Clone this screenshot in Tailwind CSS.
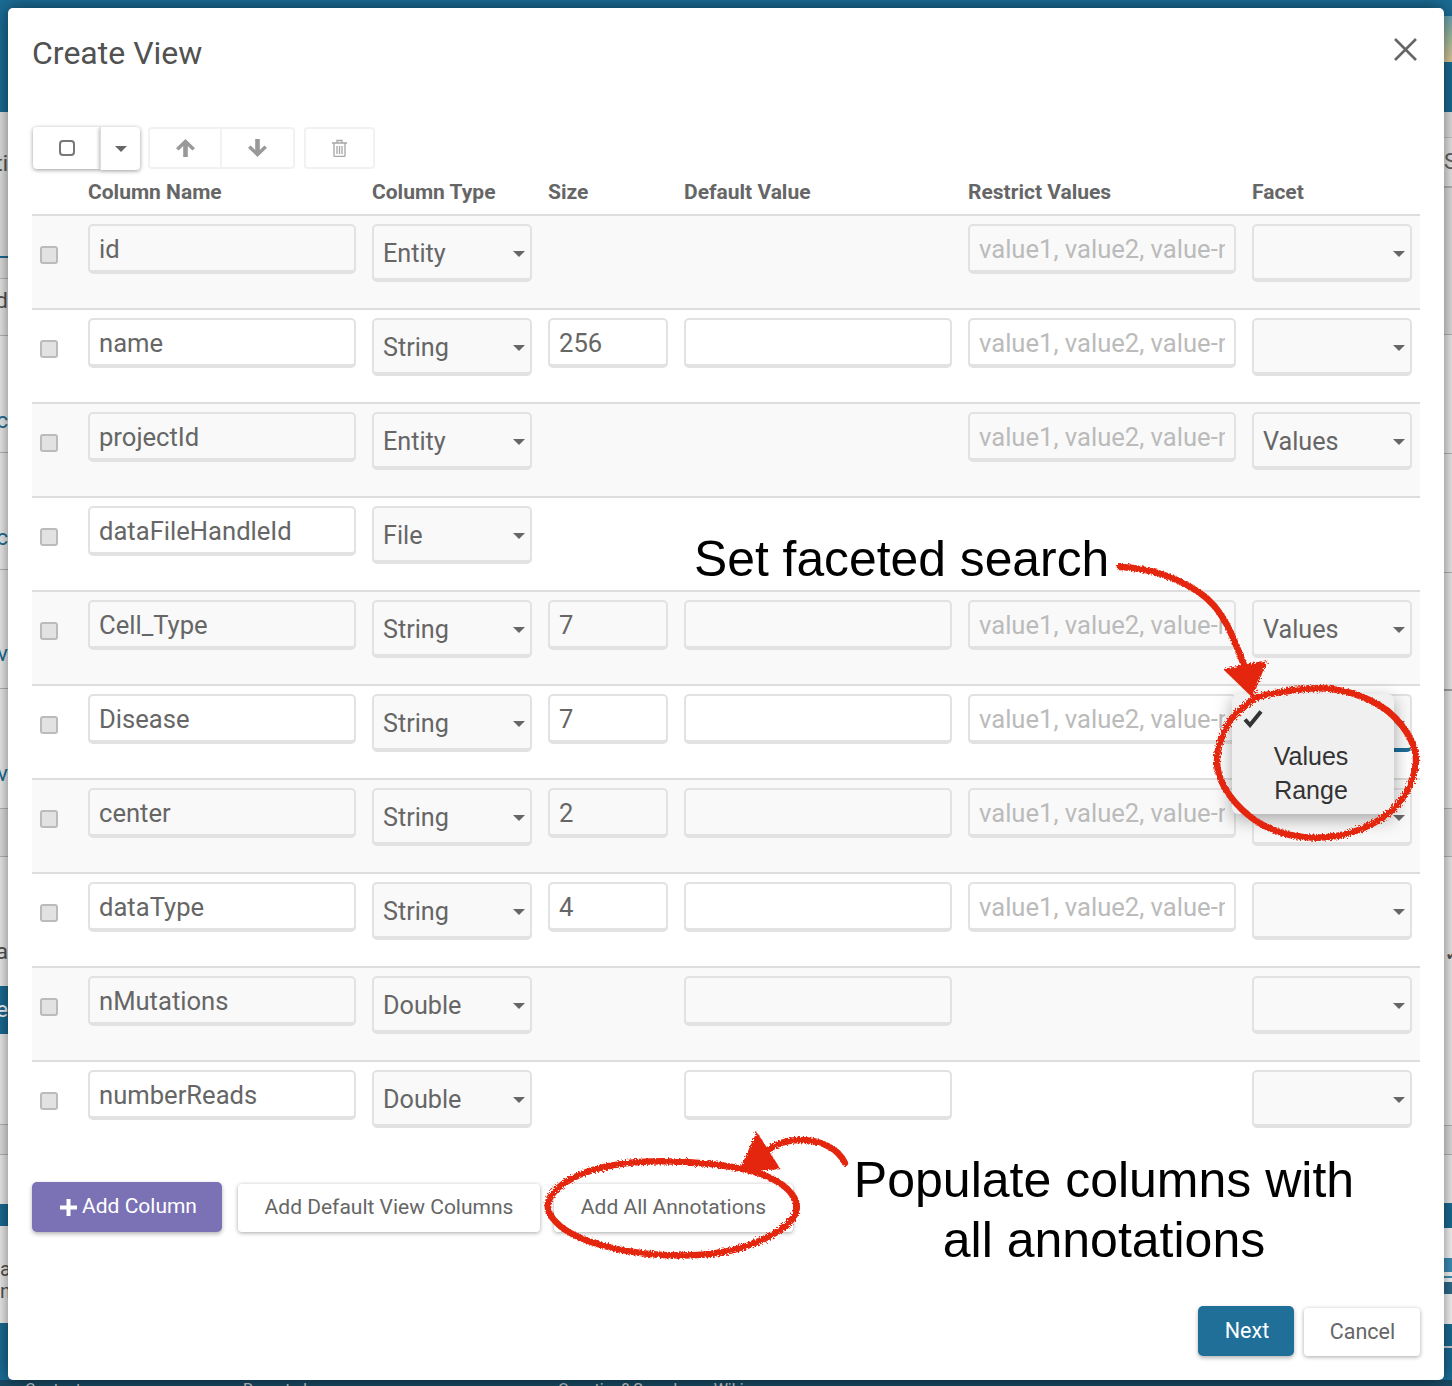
<!DOCTYPE html>
<html lang="en">
<head>
  <meta charset="UTF-8">
  <title>Create View</title>
  <script src="https://cdn.jsdelivr.net/npm/@tailwindcss/browser@4"></script>
</head>
<body class="bg-white">
<div class="relative flex h-[1386px] w-[1452px] flex-col overflow-hidden font-['Roboto',sans-serif]">
  <!-- page behind the dialog -->
  <div class="flex h-[1380px] justify-between bg-[#1b6d97]">
    <div class="w-2 overflow-hidden pt-[112px] text-right text-[22px] leading-none whitespace-nowrap">
      <div class="flex h-[144px] items-center justify-end bg-[#e6e6e6] pb-[40px] text-[#555]">ti</div>
      <div class="h-[2px] bg-[#1b6d97]"></div>
      <div class="h-[20px] bg-[#e6e6e6]"></div>
      <div class="flex h-[57px] items-center justify-end border-t border-[#bbb] bg-[#eee] pb-[12px] text-[#555]">d</div>
      <div class="flex h-[117px] items-center justify-end border-t border-[#bbb] bg-[#f2f2f2] pt-[54px] text-[#1b6d97]">c</div>
      <div class="flex h-[117px] items-center justify-end border-t border-[#bbb] bg-[#f2f2f2] pt-[54px] text-[#1b6d97]">c</div>
      <div class="flex h-[119px] items-center justify-end border-t border-[#bbb] bg-[#f2f2f2] pt-[50px] text-[#1b6d97]">v</div>
      <div class="flex h-[120px] items-center justify-end border-t border-[#bbb] bg-[#f2f2f2] pt-[50px] text-[#1b6d97]">v</div>
      <div class="h-[48px] border-t border-[#bbb] bg-[#e6e6e6]"></div>
      <div class="h-[35px] border-t border-[#bbb] bg-[#f2f2f2]"></div>
      <div class="flex h-[95px] items-start justify-end bg-[#f2f2f2] pt-[50px] text-[#555]">a</div>
      <div class="flex h-[48px] items-center justify-end bg-[#1b6d97] text-white">e</div>
      <div class="h-[90px] bg-[#f2f2f2]"></div>
      <div class="h-[30px] border-t border-[#bbb] bg-[#e6e6e6]"></div>
      <div class="h-[50px] border-t border-[#bbb] bg-[#f2f2f2]"></div>
      <div class="h-[22px] bg-[#1b6d97]"></div>
      <div class="h-[97px] bg-[#f2f2f2] pt-[32px] text-[20px] leading-[22px] text-[#555]"><div>a</div><div>n</div></div>
    </div>
    <div class="w-2 overflow-hidden pt-[16px] text-[22px] leading-none whitespace-nowrap">
      <div class="h-[46px] bg-gradient-to-b from-[#6aa7b5] via-[#a9c2a0] to-[#e5cf9f]"></div>
      <div class="h-[50px]"></div>
      <div class="h-[25px] bg-[#e6e6e6]"></div>
      <div class="flex h-[49px] items-center border-t border-[#ccc] bg-[#eee] text-[#666]">S</div>
      <div class="h-[148px] border-t-2 border-[#bbb] bg-[#e6e6e6]"></div>
      <div class="h-[119px] border-t border-[#bbb] bg-[#f2f2f2]"></div>
      <div class="h-[119px] border-t border-[#bbb] bg-[#f2f2f2]"></div>
      <div class="h-[117px] border-t border-[#bbb] bg-[#f2f2f2]"></div>
      <div class="h-[119px] border-t-2 border-[#aaa] bg-[#f2f2f2]"></div>
      <div class="h-[48px] border-t border-[#bbb] bg-[#e6e6e6]"></div>
      <div class="flex h-[269px] items-start border-t border-[#bbb] bg-[#f2f2f2] pt-[86px] text-[#555]">✓</div>
      <div class="h-[29px] border-t border-[#bbb] bg-[#e6e6e6]"></div>
      <div class="h-[49px] border-t border-[#bbb] bg-[#f2f2f2]"></div>
      <div class="h-[25px] bg-[#1b6d97]"></div>
      <div class="flex h-[96px] flex-col justify-center gap-1 bg-white">
        <div class="h-[14px] bg-[#3f93bd]"></div>
        <div class="h-[2px] bg-[#3f93bd]"></div>
        <div class="h-[12px] bg-[#2d6f92]"></div>
      </div>
      <div class="h-[22px] bg-[#1b6d97]"></div>
      <div class="h-[2px] bg-[#d8d8d8]"></div>
    </div>
  </div>
  <div class="relative h-[6px] overflow-hidden bg-[#174a64] text-[16px] leading-none whitespace-nowrap text-[#ccc]">
    <span class="absolute top-[2px] left-[25px]">Contact us</span>
    <span class="absolute top-[2px] left-[243px]">Report abuse</span>
    <span class="absolute top-[2px] left-[558px]">Question? Search our Wiki</span>
  </div>

  <!-- dialog -->
  <div class="absolute top-2 left-2 h-[1372px] w-[1436px] rounded-[5px] bg-white px-6 shadow-[0_0_18px_rgba(0,0,0,0.55)]">
    <div class="flex items-start justify-between pt-[24px]">
      <h1 class="text-[32px] leading-[42px] text-[#515151]">Create View</h1>
      <svg class="mt-[6px] mr-[3px]" width="23" height="23" viewBox="0 0 23 23" fill="none" stroke="#666" stroke-width="2.6"><path d="M1 1 22 22M22 1 1 22"/></svg>
    </div>

    <!-- toolbar -->
    <div class="mt-[53px] ml-[1px] flex h-[43px] items-start">
      <div class="flex h-[42px] w-[67px] items-center justify-center rounded-l-[4px] bg-white shadow-[0_1px_4px_rgba(0,0,0,0.4)]">
        <div class="h-4 w-4 rounded-[4px] border-2 border-[#777]"></div>
      </div>
      <div class="flex h-[43px] w-[40px] items-center justify-center rounded-r-[4px] border-l border-[#ddd] bg-white shadow-[0_1px_4px_rgba(0,0,0,0.4)]">
        <div class="border-x-[6px] border-t-[6px] border-x-transparent border-t-[#666]"></div>
      </div>
      <div class="ml-2 flex h-[42px] w-[147px] rounded-[4px] border-2 border-[#f2f2f2]">
        <div class="flex w-[72px] items-center justify-center border-r-2 border-[#f2f2f2]">
          <svg width="19" height="18" viewBox="0 0 19 18" fill="#999"><path d="M9.5 0 19 9.2l-2.6 2.4-4.6-4.5V18H7.2V7.100L2.600 11.600 0 9.200z"/></svg>
        </div>
        <div class="flex flex-1 items-center justify-center">
          <svg width="19" height="18" viewBox="0 0 19 18" fill="#999"><path d="M9.500 18 19 8.800l-2.600-2.400-4.600 4.500V0H7.200v10.900L2.600 6.400 0 8.800z"/></svg>
        </div>
      </div>
      <div class="ml-[9px] flex h-[42px] w-[71px] items-center justify-center rounded-[4px] border-2 border-[#f2f2f2]">
        <svg width="17" height="18" viewBox="0 0 17 18" fill="none" stroke="#a6a6a6" stroke-width="1.300"><path d="M1 4h15M3 4v12.500a1 1 0 0 0 1 1h9a1 1 0 0 0 1-1V4M6 4V1.500h5V4M6 7v8M8.500 7v8M11 7v8"/></svg>
      </div>
    </div>

    <!-- table header -->
    <div class="grid h-[44px] grid-cols-[40px_268px_160px_120px_268px_268px_160px] items-center gap-x-4 pt-[1px] text-[21px] font-bold text-[#666]">
      <div></div><div>Column Name</div><div>Column Type</div><div>Size</div><div>Default Value</div><div>Restrict Values</div><div>Facet</div>
    </div>

    <!-- rows -->
    <div class="w-[1388px]">
      <div class="grid h-[94px] grid-cols-[40px_268px_160px_120px_268px_268px_160px] items-start gap-x-4 border-t-2 border-[#ddd] bg-[#f9f9f9] pt-2">
        <input type="checkbox" class="mt-[22px] ml-2 h-[18px] w-[18px] appearance-none rounded-[3px] border-2 border-[#bbb] bg-[#e2e2e2]">
        <input value="id" class="h-[50px] w-full rounded-[5px] border-2 border-b-4 border-[#e2e2e2] bg-transparent px-[9px] pt-[2px] text-[25.6px] text-[#666] outline-none">
        <div class="flex h-[58px] items-center justify-between rounded-[5px] border-2 border-b-4 border-[#e2e2e2] pt-[4px] pr-[5px] pl-[9px] text-[25.2px] text-[#666]">Entity<i class="border-x-[6px] border-t-[6px] border-x-transparent border-t-[#666]"></i></div>
        <div></div><div></div>
        <input placeholder="value1, value2, value-n" class="h-[50px] w-full rounded-[5px] border-2 border-b-4 border-[#e2e2e2] bg-transparent px-[9px] pt-[2px] text-[25.6px] outline-none placeholder:text-[#bbb]">
        <div class="flex h-[58px] items-center justify-between rounded-[5px] border-2 border-b-4 border-[#e2e2e2] pt-[4px] pr-[5px] pl-[9px] text-[25.2px] text-[#666]"><span></span><i class="border-x-[6px] border-t-[6px] border-x-transparent border-t-[#666]"></i></div>
      </div>
      <div class="grid h-[94px] grid-cols-[40px_268px_160px_120px_268px_268px_160px] items-start gap-x-4 border-t-2 border-[#ddd] pt-2">
        <input type="checkbox" class="mt-[22px] ml-2 h-[18px] w-[18px] appearance-none rounded-[3px] border-2 border-[#bbb] bg-[#e2e2e2]">
        <input value="name" class="h-[50px] w-full rounded-[5px] border-2 border-b-4 border-[#e2e2e2] bg-transparent px-[9px] pt-[2px] text-[25.6px] text-[#666] outline-none">
        <div class="flex h-[58px] items-center justify-between rounded-[5px] border-2 border-b-4 border-[#e2e2e2] bg-[#f9f9f9] pt-[4px] pr-[5px] pl-[9px] text-[25.2px] text-[#666]">String<i class="border-x-[6px] border-t-[6px] border-x-transparent border-t-[#666]"></i></div>
        <input value="256" class="h-[50px] w-full rounded-[5px] border-2 border-b-4 border-[#e2e2e2] bg-transparent px-[9px] pt-[2px] text-[25.6px] text-[#666] outline-none">
        <input class="h-[50px] w-full rounded-[5px] border-2 border-b-4 border-[#e2e2e2] bg-transparent px-[9px] pt-[2px] text-[25.6px] outline-none">
        <input placeholder="value1, value2, value-n" class="h-[50px] w-full rounded-[5px] border-2 border-b-4 border-[#e2e2e2] bg-transparent px-[9px] pt-[2px] text-[25.6px] outline-none placeholder:text-[#bbb]">
        <div class="flex h-[58px] items-center justify-between rounded-[5px] border-2 border-b-4 border-[#e2e2e2] bg-[#f9f9f9] pt-[4px] pr-[5px] pl-[9px] text-[25.2px] text-[#666]"><span></span><i class="border-x-[6px] border-t-[6px] border-x-transparent border-t-[#666]"></i></div>
      </div>
      <div class="grid h-[94px] grid-cols-[40px_268px_160px_120px_268px_268px_160px] items-start gap-x-4 border-t-2 border-[#ddd] bg-[#f9f9f9] pt-2">
        <input type="checkbox" class="mt-[22px] ml-2 h-[18px] w-[18px] appearance-none rounded-[3px] border-2 border-[#bbb] bg-[#e2e2e2]">
        <input value="projectId" class="h-[50px] w-full rounded-[5px] border-2 border-b-4 border-[#e2e2e2] bg-transparent px-[9px] pt-[2px] text-[25.6px] text-[#666] outline-none">
        <div class="flex h-[58px] items-center justify-between rounded-[5px] border-2 border-b-4 border-[#e2e2e2] pt-[4px] pr-[5px] pl-[9px] text-[25.2px] text-[#666]">Entity<i class="border-x-[6px] border-t-[6px] border-x-transparent border-t-[#666]"></i></div>
        <div></div><div></div>
        <input placeholder="value1, value2, value-n" class="h-[50px] w-full rounded-[5px] border-2 border-b-4 border-[#e2e2e2] bg-transparent px-[9px] pt-[2px] text-[25.6px] outline-none placeholder:text-[#bbb]">
        <div class="flex h-[58px] items-center justify-between rounded-[5px] border-2 border-b-4 border-[#e2e2e2] pt-[4px] pr-[5px] pl-[9px] text-[25.2px] text-[#666]">Values<i class="border-x-[6px] border-t-[6px] border-x-transparent border-t-[#666]"></i></div>
      </div>
      <div class="grid h-[94px] grid-cols-[40px_268px_160px_120px_268px_268px_160px] items-start gap-x-4 border-t-2 border-[#ddd] pt-2">
        <input type="checkbox" class="mt-[22px] ml-2 h-[18px] w-[18px] appearance-none rounded-[3px] border-2 border-[#bbb] bg-[#e2e2e2]">
        <input value="dataFileHandleId" class="h-[50px] w-full rounded-[5px] border-2 border-b-4 border-[#e2e2e2] bg-transparent px-[9px] pt-[2px] text-[25.6px] text-[#666] outline-none">
        <div class="flex h-[58px] items-center justify-between rounded-[5px] border-2 border-b-4 border-[#e2e2e2] bg-[#f9f9f9] pt-[4px] pr-[5px] pl-[9px] text-[25.2px] text-[#666]">File<i class="border-x-[6px] border-t-[6px] border-x-transparent border-t-[#666]"></i></div>
      </div>
      <div class="grid h-[94px] grid-cols-[40px_268px_160px_120px_268px_268px_160px] items-start gap-x-4 border-t-2 border-[#ddd] bg-[#f9f9f9] pt-2">
        <input type="checkbox" class="mt-[22px] ml-2 h-[18px] w-[18px] appearance-none rounded-[3px] border-2 border-[#bbb] bg-[#e2e2e2]">
        <input value="Cell_Type" class="h-[50px] w-full rounded-[5px] border-2 border-b-4 border-[#e2e2e2] bg-transparent px-[9px] pt-[2px] text-[25.6px] text-[#666] outline-none">
        <div class="flex h-[58px] items-center justify-between rounded-[5px] border-2 border-b-4 border-[#e2e2e2] pt-[4px] pr-[5px] pl-[9px] text-[25.2px] text-[#666]">String<i class="border-x-[6px] border-t-[6px] border-x-transparent border-t-[#666]"></i></div>
        <input value="7" class="h-[50px] w-full rounded-[5px] border-2 border-b-4 border-[#e2e2e2] bg-transparent px-[9px] pt-[2px] text-[25.6px] text-[#666] outline-none">
        <input class="h-[50px] w-full rounded-[5px] border-2 border-b-4 border-[#e2e2e2] bg-transparent px-[9px] pt-[2px] text-[25.6px] outline-none">
        <input placeholder="value1, value2, value-n" class="h-[50px] w-full rounded-[5px] border-2 border-b-4 border-[#e2e2e2] bg-transparent px-[9px] pt-[2px] text-[25.6px] outline-none placeholder:text-[#bbb]">
        <div class="flex h-[58px] items-center justify-between rounded-[5px] border-2 border-b-4 border-[#e2e2e2] pt-[4px] pr-[5px] pl-[9px] text-[25.2px] text-[#666]">Values<i class="border-x-[6px] border-t-[6px] border-x-transparent border-t-[#666]"></i></div>
      </div>
      <div class="grid h-[94px] grid-cols-[40px_268px_160px_120px_268px_268px_160px] items-start gap-x-4 border-t-2 border-[#ddd] pt-2">
        <input type="checkbox" class="mt-[22px] ml-2 h-[18px] w-[18px] appearance-none rounded-[3px] border-2 border-[#bbb] bg-[#e2e2e2]">
        <input value="Disease" class="h-[50px] w-full rounded-[5px] border-2 border-b-4 border-[#e2e2e2] bg-transparent px-[9px] pt-[2px] text-[25.6px] text-[#666] outline-none">
        <div class="flex h-[58px] items-center justify-between rounded-[5px] border-2 border-b-4 border-[#e2e2e2] bg-[#f9f9f9] pt-[4px] pr-[5px] pl-[9px] text-[25.2px] text-[#666]">String<i class="border-x-[6px] border-t-[6px] border-x-transparent border-t-[#666]"></i></div>
        <input value="7" class="h-[50px] w-full rounded-[5px] border-2 border-b-4 border-[#e2e2e2] bg-transparent px-[9px] pt-[2px] text-[25.6px] text-[#666] outline-none">
        <input class="h-[50px] w-full rounded-[5px] border-2 border-b-4 border-[#e2e2e2] bg-transparent px-[9px] pt-[2px] text-[25.6px] outline-none">
        <input placeholder="value1, value2, value-n" class="h-[50px] w-full rounded-[5px] border-2 border-b-4 border-[#e2e2e2] bg-transparent px-[9px] pt-[2px] text-[25.6px] outline-none placeholder:text-[#bbb]">
        <div class="flex h-[58px] items-center justify-between rounded-[5px] border-2 border-b-4 border-[#e2e2e2] border-b-[#1b6d97] bg-[#f9f9f9] pt-[4px] pr-[5px] pl-[9px] text-[25.2px] text-[#666]"><span></span><i class="border-x-[6px] border-t-[6px] border-x-transparent border-t-[#666]"></i></div>
      </div>
      <div class="grid h-[94px] grid-cols-[40px_268px_160px_120px_268px_268px_160px] items-start gap-x-4 border-t-2 border-[#ddd] bg-[#f9f9f9] pt-2">
        <input type="checkbox" class="mt-[22px] ml-2 h-[18px] w-[18px] appearance-none rounded-[3px] border-2 border-[#bbb] bg-[#e2e2e2]">
        <input value="center" class="h-[50px] w-full rounded-[5px] border-2 border-b-4 border-[#e2e2e2] bg-transparent px-[9px] pt-[2px] text-[25.6px] text-[#666] outline-none">
        <div class="flex h-[58px] items-center justify-between rounded-[5px] border-2 border-b-4 border-[#e2e2e2] pt-[4px] pr-[5px] pl-[9px] text-[25.2px] text-[#666]">String<i class="border-x-[6px] border-t-[6px] border-x-transparent border-t-[#666]"></i></div>
        <input value="2" class="h-[50px] w-full rounded-[5px] border-2 border-b-4 border-[#e2e2e2] bg-transparent px-[9px] pt-[2px] text-[25.6px] text-[#666] outline-none">
        <input class="h-[50px] w-full rounded-[5px] border-2 border-b-4 border-[#e2e2e2] bg-transparent px-[9px] pt-[2px] text-[25.6px] outline-none">
        <input placeholder="value1, value2, value-n" class="h-[50px] w-full rounded-[5px] border-2 border-b-4 border-[#e2e2e2] bg-transparent px-[9px] pt-[2px] text-[25.6px] outline-none placeholder:text-[#bbb]">
        <div class="flex h-[58px] items-center justify-between rounded-[5px] border-2 border-b-4 border-[#e2e2e2] pt-[4px] pr-[5px] pl-[9px] text-[25.2px] text-[#666]"><span></span><i class="border-x-[6px] border-t-[6px] border-x-transparent border-t-[#666]"></i></div>
      </div>
      <div class="grid h-[94px] grid-cols-[40px_268px_160px_120px_268px_268px_160px] items-start gap-x-4 border-t-2 border-[#ddd] pt-2">
        <input type="checkbox" class="mt-[22px] ml-2 h-[18px] w-[18px] appearance-none rounded-[3px] border-2 border-[#bbb] bg-[#e2e2e2]">
        <input value="dataType" class="h-[50px] w-full rounded-[5px] border-2 border-b-4 border-[#e2e2e2] bg-transparent px-[9px] pt-[2px] text-[25.6px] text-[#666] outline-none">
        <div class="flex h-[58px] items-center justify-between rounded-[5px] border-2 border-b-4 border-[#e2e2e2] bg-[#f9f9f9] pt-[4px] pr-[5px] pl-[9px] text-[25.2px] text-[#666]">String<i class="border-x-[6px] border-t-[6px] border-x-transparent border-t-[#666]"></i></div>
        <input value="4" class="h-[50px] w-full rounded-[5px] border-2 border-b-4 border-[#e2e2e2] bg-transparent px-[9px] pt-[2px] text-[25.6px] text-[#666] outline-none">
        <input class="h-[50px] w-full rounded-[5px] border-2 border-b-4 border-[#e2e2e2] bg-transparent px-[9px] pt-[2px] text-[25.6px] outline-none">
        <input placeholder="value1, value2, value-n" class="h-[50px] w-full rounded-[5px] border-2 border-b-4 border-[#e2e2e2] bg-transparent px-[9px] pt-[2px] text-[25.6px] outline-none placeholder:text-[#bbb]">
        <div class="flex h-[58px] items-center justify-between rounded-[5px] border-2 border-b-4 border-[#e2e2e2] bg-[#f9f9f9] pt-[4px] pr-[5px] pl-[9px] text-[25.2px] text-[#666]"><span></span><i class="border-x-[6px] border-t-[6px] border-x-transparent border-t-[#666]"></i></div>
      </div>
      <div class="grid h-[94px] grid-cols-[40px_268px_160px_120px_268px_268px_160px] items-start gap-x-4 border-t-2 border-[#ddd] bg-[#f9f9f9] pt-2">
        <input type="checkbox" class="mt-[22px] ml-2 h-[18px] w-[18px] appearance-none rounded-[3px] border-2 border-[#bbb] bg-[#e2e2e2]">
        <input value="nMutations" class="h-[50px] w-full rounded-[5px] border-2 border-b-4 border-[#e2e2e2] bg-transparent px-[9px] pt-[2px] text-[25.6px] text-[#666] outline-none">
        <div class="flex h-[58px] items-center justify-between rounded-[5px] border-2 border-b-4 border-[#e2e2e2] pt-[4px] pr-[5px] pl-[9px] text-[25.2px] text-[#666]">Double<i class="border-x-[6px] border-t-[6px] border-x-transparent border-t-[#666]"></i></div>
        <div></div>
        <input class="h-[50px] w-full rounded-[5px] border-2 border-b-4 border-[#e2e2e2] bg-transparent px-[9px] pt-[2px] text-[25.6px] outline-none">
        <div></div>
        <div class="flex h-[58px] items-center justify-between rounded-[5px] border-2 border-b-4 border-[#e2e2e2] pt-[4px] pr-[5px] pl-[9px] text-[25.2px] text-[#666]"><span></span><i class="border-x-[6px] border-t-[6px] border-x-transparent border-t-[#666]"></i></div>
      </div>
      <div class="grid h-[94px] grid-cols-[40px_268px_160px_120px_268px_268px_160px] items-start gap-x-4 border-t-2 border-[#ddd] pt-2">
        <input type="checkbox" class="mt-[22px] ml-2 h-[18px] w-[18px] appearance-none rounded-[3px] border-2 border-[#bbb] bg-[#e2e2e2]">
        <input value="numberReads" class="h-[50px] w-full rounded-[5px] border-2 border-b-4 border-[#e2e2e2] bg-transparent px-[9px] pt-[2px] text-[25.6px] text-[#666] outline-none">
        <div class="flex h-[58px] items-center justify-between rounded-[5px] border-2 border-b-4 border-[#e2e2e2] bg-[#f9f9f9] pt-[4px] pr-[5px] pl-[9px] text-[25.2px] text-[#666]">Double<i class="border-x-[6px] border-t-[6px] border-x-transparent border-t-[#666]"></i></div>
        <div></div>
        <input class="h-[50px] w-full rounded-[5px] border-2 border-b-4 border-[#e2e2e2] bg-transparent px-[9px] pt-[2px] text-[25.6px] outline-none">
        <div></div>
        <div class="flex h-[58px] items-center justify-between rounded-[5px] border-2 border-b-4 border-[#e2e2e2] bg-[#f9f9f9] pt-[4px] pr-[5px] pl-[9px] text-[25.2px] text-[#666]"><span></span><i class="border-x-[6px] border-t-[6px] border-x-transparent border-t-[#666]"></i></div>
      </div>
    </div>

    <!-- add buttons -->
    <div class="mt-[28px] flex items-end text-[21px] text-[#666]">
      <button class="flex h-[50px] w-[190px] items-center justify-center gap-[5px] rounded-[5px] bg-[#7a72b4] pl-[3px] text-white shadow-[0_2px_4px_rgba(0,0,0,0.3)]">
        <svg width="17" height="17" viewBox="0 0 17 17" fill="#fff"><path d="M6.500 0h4v6.500H17v4h-6.500V17h-4v-6.500H0v-4h6.500z"/></svg>Add Column
      </button>
      <button class="ml-4 h-[48px] w-[302px] rounded-[4px] bg-white shadow-[0_1px_4px_rgba(0,0,0,0.35)]">Add Default View Columns</button>
      <button class="ml-[14px] h-[48px] w-[239px] rounded-[4px] bg-white shadow-[0_1px_4px_rgba(0,0,0,0.35)]">Add All Annotations</button>
    </div>

    <!-- footer -->
    <div class="mt-[74px] flex items-end justify-end gap-[10px] text-[21.5px]">
      <button class="h-[50px] w-[96px] rounded-[5px] bg-[#1f6f99] pl-[2px] text-white shadow-[0_2px_4px_rgba(0,0,0,0.3)]">Next</button>
      <button class="h-[48px] w-[116px] rounded-[4px] bg-white pl-[1px] text-[#666] shadow-[0_1px_4px_rgba(0,0,0,0.35)]">Cancel</button>
    </div>
  </div>

  <!-- facet dropdown open over the Disease row -->
  <div class="absolute top-[694px] left-[1232px] h-[120px] w-[162px] rounded-[6px] bg-[#f0f0f0] pr-[4px] text-center font-['Liberation_Sans',sans-serif] text-[25px] leading-[34px] text-[#333] shadow-[0_5px_18px_rgba(0,0,0,0.35)]">
    <svg class="ml-[11px] pt-4" width="20" height="34" viewBox="0 0 20 18" fill="none" stroke="#333" stroke-width="4"><path d="M2 9.500 7 15 18 1.500"/></svg>
    <div class="mt-[11px]">Values</div>
    <div>Range</div>
  </div>

  <!-- hand-drawn notes on the screenshot -->
  <div class="absolute top-[529px] left-[694px] font-['Liberation_Sans',sans-serif] text-[49.8px] leading-[60px] whitespace-nowrap text-black">Set faceted search</div>
  <div class="absolute top-[1150px] left-[844px] w-[520px] text-center font-['Liberation_Sans',sans-serif] text-[50px] leading-[60px] whitespace-nowrap text-black">Populate columns with<br>all annotations</div>
  <svg class="pointer-events-none absolute top-0 left-0" width="1452" height="1386" viewBox="0 0 1452 1386" fill="none" stroke="#e3260f" stroke-width="6.500" stroke-linecap="round">
    <defs>
      <filter id="rough" x="0" y="0" width="100%" height="100%" filterUnits="userSpaceOnUse">
        <feTurbulence type="fractalNoise" baseFrequency="0.6" numOctaves="2" seed="3"/>
        <feDisplacementMap in="SourceGraphic" scale="5"/>
      </filter>
    </defs>
    <g filter="url(#rough)">
      <path d="M1120 567C1150 568 1178 578 1200 593S1232 632 1248 676"/>
      <path d="M1226 670 1265 662 1252 695z" fill="#e3260f" stroke-width="3"/>
      <path d="M1257 697Q1273 693 1295 690Q1317 687 1335 689.500Q1353 692 1371.500 701Q1390 710 1401.500 725Q1413 740 1415.500 753.500Q1418 767 1409 787Q1400 807 1380 819.500Q1360 832 1336.500 836Q1313 840 1290 835Q1267 830 1250 816.500Q1233 803 1224 786.500Q1215 770 1217.500 753.500Q1220 737 1228.500 723.500Q1237 710 1257 697"/>
      <path d="M845 1163C838 1148 820 1140 801 1140S772 1146 762 1155"/>
      <path d="M757 1135 778 1168 741 1170z" fill="#e3260f" stroke-width="3"/>
      <path d="M639 1162Q603 1165 581.500 1174Q560 1183 551.500 1195Q543 1207 554 1220Q565 1233 589.500 1241.500Q614 1250 644.500 1253.500Q675 1257 705 1254.500Q735 1252 759.500 1241Q784 1230 792.500 1218.500Q801 1207 792.500 1195Q784 1183 765 1175.500Q746 1168 710.500 1164Q675 1160 639 1162"/>
    </g>
  </svg>
</div>
</body>
</html>
